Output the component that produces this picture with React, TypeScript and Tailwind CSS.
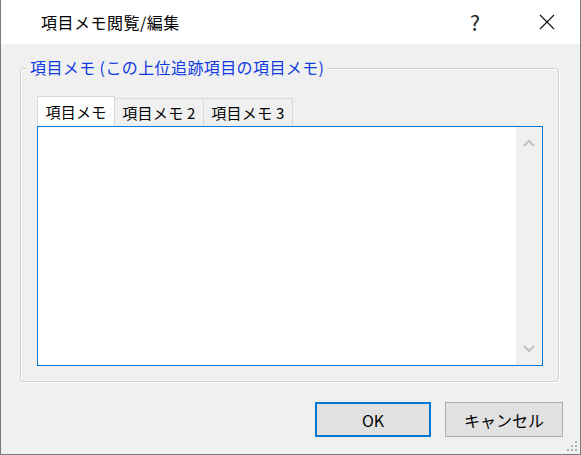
import React from "react";

const font = { fontFamily: '"Noto Sans CJK JP", "Noto Sans", sans-serif' };

function Chevron({ up }: { up?: boolean }) {
  return (
    <svg width="12" height="8" viewBox="0 0 12 8">
      <polyline
        points={up ? "1,7 6,2 11,7" : "1,1 6,6 11,1"}
        fill="none"
        stroke="#c2c2c2"
        strokeWidth="2"
      />
    </svg>
  );
}

export default function App() {
  return (
    <div
      className="w-[581px] h-[455px] flex flex-col bg-[#f0f0f0] border-x border-b border-[#7a7a7a] relative text-black"
      style={font}
    >
      {/* Title bar */}
      <div className="h-[44px] bg-white flex items-center shrink-0">
        <div className="pl-[40px] text-[16px] tracking-[0.5px] leading-none flex-1">項目メモ閲覧/編集</div>
        <div className="w-[30px] text-center text-[21px] leading-none mr-[34px] text-[#222]">?</div>
        <div className="w-[46px] flex justify-center mr-[10px]">
          <svg width="16" height="16" viewBox="0 0 16 16">
            <line x1="1" y1="1" x2="15" y2="15" stroke="#111" strokeWidth="1.1" />
            <line x1="15" y1="1" x2="1" y2="15" stroke="#111" strokeWidth="1.1" />
          </svg>
        </div>
      </div>

      {/* Body */}
      <div className="flex-1 flex flex-col pl-[19px] pr-[17px] pt-[24px]">
        <div className="w-[539px] h-[314px] border border-[#d5d3c7] rounded-[3px] shadow-[1px_1px_0_#fff,inset_1px_1px_0_#fff] relative pl-[16px] pt-[27px]">
          <div className="absolute left-[6px] top-[-12px] bg-[#f0f0f0] px-[3px] text-[16px] tracking-[0.4px] leading-[20px] text-[#0f3be0] whitespace-pre">
            項目メモ (この上位追跡項目の項目メモ)
          </div>
          {/* Tabs */}
          <div className="flex items-end h-[30px]">
            <div className="h-[30px] w-[78px] bg-white border-x border-t border-[#d9d9d9] flex items-center justify-center text-[15px] tracking-[0.3px] leading-none">
              項目メモ
            </div>
            <div className="h-[28px] w-[89px] bg-[#f0f0f0] border-r border-t border-[#d9d9d9] flex items-center justify-center text-[15px] tracking-[0.3px] leading-none whitespace-pre">
              項目メモ 2
            </div>
            <div className="h-[28px] w-[89px] bg-[#f0f0f0] border-r border-t border-[#d9d9d9] flex items-center justify-center text-[15px] tracking-[0.3px] leading-none whitespace-pre">
              項目メモ 3
            </div>
          </div>
          {/* Text area */}
          <div className="w-[506px] h-[240px] border border-[#0078d7] bg-white flex justify-end">
            <div className="w-[26px] h-full bg-[#f0f0f0] flex flex-col justify-between items-center py-[12px]">
              <Chevron up />
              <Chevron />
            </div>
          </div>
        </div>

        {/* Buttons */}
        <div className="flex justify-end gap-[14px] mt-[20px]">
          <div className="w-[116px] h-[35px] border-2 border-[#0078d7] bg-[#e1e1e1] flex items-center justify-center text-[16px] leading-none">
            OK
          </div>
          <div className="w-[118px] h-[35px] border border-[#adadad] bg-[#e1e1e1] flex items-center justify-center text-[16px] leading-none">
            キャンセル
          </div>
        </div>
      </div>

      {/* Resize grip */}
      <svg className="absolute right-[2px] bottom-[2px]" width="12" height="12" viewBox="0 0 12 12">
        {[
          [9, 1],
          [5, 5],
          [9, 5],
          [1, 9],
          [5, 9],
          [9, 9],
        ].map(([x, y], i) => (
          <rect key={i} x={x} y={y} width="2" height="2" fill="#b0b0b0" />
        ))}
      </svg>
    </div>
  );
}
